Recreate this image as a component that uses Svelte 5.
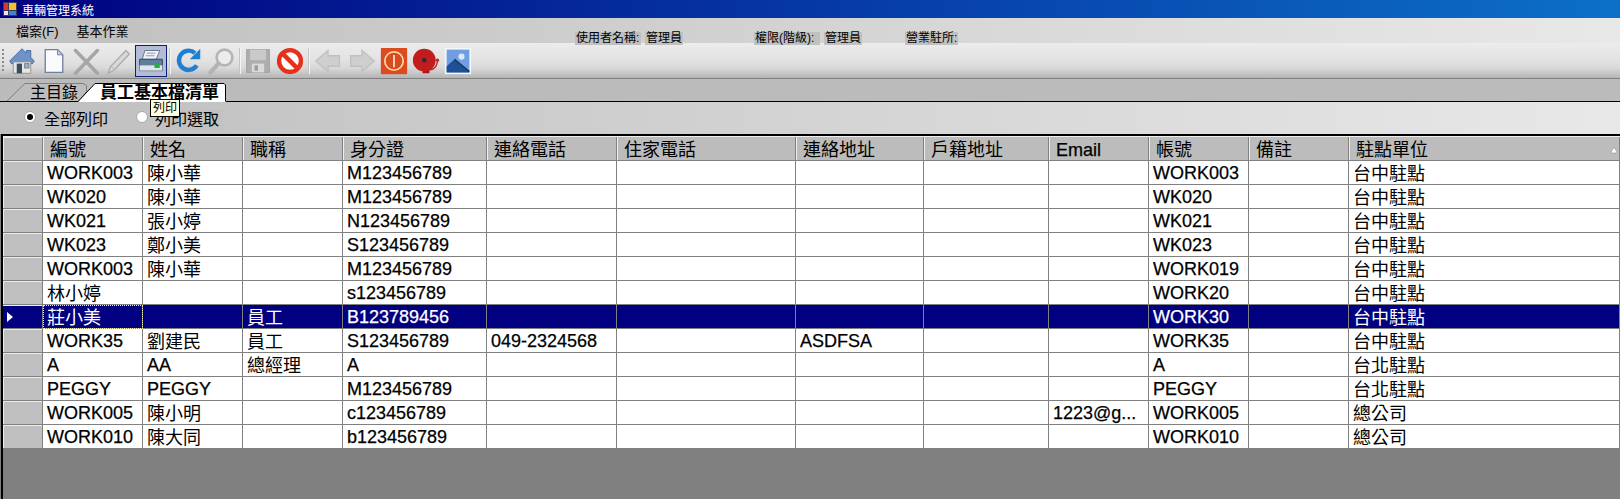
<script>
  const headers = ["編號", "姓名", "職稱", "身分證", "連絡電話", "住家電話", "連絡地址", "戶籍地址", "Email", "帳號", "備註", "駐點單位"];

  const rows = [
    ["WORK003", "陳小華", "", "M123456789", "", "", "", "", "", "WORK003", "", "台中駐點"],
    ["WK020", "陳小華", "", "M123456789", "", "", "", "", "", "WK020", "", "台中駐點"],
    ["WK021", "張小婷", "", "N123456789", "", "", "", "", "", "WK021", "", "台中駐點"],
    ["WK023", "鄭小美", "", "S123456789", "", "", "", "", "", "WK023", "", "台中駐點"],
    ["WORK003", "陳小華", "", "M123456789", "", "", "", "", "", "WORK019", "", "台中駐點"],
    ["林小婷", "", "", "s123456789", "", "", "", "", "", "WORK20", "", "台中駐點"],
    ["莊小美", "", "員工", "B123789456", "", "", "", "", "", "WORK30", "", "台中駐點"],
    ["WORK35", "劉建民", "員工", "S123456789", "049-2324568", "", "ASDFSA", "", "", "WORK35", "", "台中駐點"],
    ["A", "AA", "總經理", "A", "", "", "", "", "", "A", "", "台北駐點"],
    ["PEGGY", "PEGGY", "", "M123456789", "", "", "", "", "", "PEGGY", "", "台北駐點"],
    ["WORK005", "陳小明", "", "c123456789", "", "", "", "", "1223@g...", "WORK005", "", "總公司"],
    ["WORK010", "陳大同", "", "b123456789", "", "", "", "", "", "WORK010", "", "總公司"]
  ];

  const selectedRow = 6;
  const isCjk = (s) => /[^\x00-\x7f]/.test(s);
</script>

<div class="app">
  <div class="titlebar">
    <svg class="app-icon" viewBox="0 0 14 14" width="14" height="14">
      <rect width="14" height="14" fill="#3a3a5a" />
      <rect x="1" y="1" width="4" height="7" fill="#d83a2a" />
      <rect x="6" y="1" width="7" height="7" fill="#f0c030" />
      <rect x="1" y="9" width="4" height="4" fill="#e8e8e8" />
      <rect x="6" y="9" width="7" height="4" fill="#4080d8" />
    </svg>
    <span>車輛管理系統</span>
  </div>

  <div class="menubar">
    <span>檔案(F)</span>
    <span>基本作業</span>
    <div class="user-info">
      <div class="info"><span>使用者名稱:</span><span>管理員</span></div>
      <div class="info"><span>權限(階級):</span><span>管理員</span></div>
      <div class="info"><span>營業駐所:</span></div>
    </div>
  </div>

  <div class="toolbar">
    <div class="grip"></div>

    <button class="tool">
      <svg viewBox="0 0 32 32">
        <path d="M2 16 16 2l5 5V4h5v8l4 4-2 3H4z" fill="#6f93c8" stroke="#3f5f98" />
        <path d="M6 17h20v13H6z" fill="#e8e6e0" stroke="#8c8c8c" />
        <rect x="10" y="19" width="6" height="11" fill="#3a4a60" />
        <rect x="19" y="19" width="5" height="5" fill="#8fb0d8" stroke="#7a7a7a" />
      </svg>
    </button>
    <button class="tool">
      <svg viewBox="0 0 32 32">
        <path d="M6 3h14l6 6v20H6z" fill="#fbfbfd" stroke="#6f7f9f" stroke-width="1.5" />
        <path d="M20 3v6h6z" fill="#c4cede" stroke="#6f7f9f" />
      </svg>
    </button>
    <button class="tool">
      <svg viewBox="0 0 32 32">
        <path d="M4 4 29 30M29 4 4 30" stroke="#a6a6a6" stroke-width="4" stroke-linecap="round" />
      </svg>
    </button>
    <button class="tool">
      <svg viewBox="0 0 32 32">
        <path d="M5 30 7 23 25 4l4 4-17 18z" fill="#d8d8d8" stroke="#ababab" stroke-width="1.5" />
        <path d="M8 22l4 4" stroke="#ababab" />
      </svg>
    </button>
    <button class="tool active">
      <svg viewBox="0 0 32 32">
        <path d="M9 4h17l-4 10H6z" fill="#f2f4f6" stroke="#5c6c88" />
        <path d="M11 7h10M10 10h10" stroke="#7e8ca4" />
        <path d="M3 14h26v13H3z" fill="#5f7f9f" stroke="#2d4058" />
        <rect x="3" y="21" width="26" height="6" fill="#dfe5ea" />
        <rect x="20" y="19" width="6" height="5" fill="#22b03c" />
      </svg>
    </button>
    <div class="sep"></div>

    <button class="tool">
      <svg viewBox="0 0 32 32">
        <path d="M26 21a11 11 0 1 1-2-14" fill="none" stroke="#1f7fd0" stroke-width="5" />
        <path d="M30 2v12H18z" fill="#1f7fd0" />
      </svg>
    </button>
    <button class="tool m1">
      <svg viewBox="0 0 32 32">
        <circle cx="20" cy="12" r="9" fill="#ececec" stroke="#b4b4b4" stroke-width="3" />
        <path d="M13 19 4 29" stroke="#b4b4b4" stroke-width="5" stroke-linecap="round" />
      </svg>
    </button>
    <div class="sep"></div>

    <button class="tool">
      <svg viewBox="0 0 32 32">
        <path d="M3 3h26v26H3z" fill="#aeaeae" stroke="#9c9c9c" />
        <rect x="7" y="3" width="18" height="12" fill="#cacaca" />
        <rect x="9" y="19" width="14" height="10" fill="#dadada" />
        <rect x="12" y="21" width="4" height="6" fill="#9c9c9c" />
      </svg>
    </button>
    <button class="tool">
      <svg viewBox="0 0 32 32">
        <circle cx="16" cy="16" r="12.500" fill="#fff" stroke="#e5301c" stroke-width="5" />
        <path d="M7 7 25 25" stroke="#e5301c" stroke-width="5" />
      </svg>
    </button>
    <div class="sep wide"></div>

    <button class="tool">
      <svg viewBox="0 0 32 32">
        <path d="M2 16 16 4v6h13v12H16v6z" fill="#cfcfcf" stroke="#c0c0c0" stroke-width="1.5" />
      </svg>
    </button>
    <button class="tool m2">
      <svg viewBox="0 0 32 32">
        <path d="M30 16 16 4v6H3v12h13v6z" fill="#cfcfcf" stroke="#c0c0c0" stroke-width="1.5" />
      </svg>
    </button>
    <button class="tool">
      <svg viewBox="0 0 32 32">
        <rect x="1" y="1" width="30" height="30" rx="1" fill="#dc4a20" />
        <circle cx="16" cy="16" r="10.500" fill="none" stroke="#f6d8a8" stroke-width="2" />
        <path d="M16 9v14" stroke="#f6e4c4" stroke-width="2" />
      </svg>
    </button>
    <button class="tool">
      <svg viewBox="0 0 32 32">
        <path d="M12 26h8v4h-8z" fill="#b01818" />
        <path d="M20 26c5 0 8-3 9-9" fill="none" stroke="#c02020" stroke-width="1.5" />
        <circle cx="29" cy="15" r="2" fill="#d02020" />
        <circle cx="14" cy="15" r="13" fill="#c21c1c" />
        <circle cx="14" cy="15" r="2.500" fill="#203038" />
      </svg>
    </button>
    <button class="tool">
      <svg viewBox="0 0 32 32">
        <rect x="1" y="1" width="30" height="30" fill="#f4f6fa" />
        <rect x="3" y="3" width="26" height="26" fill="#6f9fe0" />
        <circle cx="20" cy="11" r="3.500" fill="#dce8f8" />
        <path d="M3 22 12 14 20 21 29 28v1H3z" fill="#1f4f98" />
        <path d="M12 14 29 28" stroke="#18304f" stroke-width="1.500" />
      </svg>
    </button>
  </div>

  <div class="tabstrip">
    <div class="tab">
      <svg viewBox="0 0 80 18" width="80" height="18">
        <path d="M0 18 18 .5h58l3.500 2v6L72 18" fill="#bdbdbd" stroke="#808080" />
      </svg>
      <span>主目錄</span>
    </div>
    <div class="tab current">
      <svg viewBox="0 0 148 19" width="148" height="19">
        <path d="M0 19 17 .5h129l1.500 1.500V19z" fill="#fff" />
        <path d="M0 18.500 17 .5h129l1.500 1.500V18" fill="none" stroke="#000" />
      </svg>
      <span>員工基本檔清單</span>
    </div>
  </div>

  <div class="options">
    <label class="radio">
      <span class="dot checked"></span>
      <span class="radio-text">全部列印</span>
    </label>
    <label class="radio">
      <span class="dot"></span>
      <span class="radio-text">列印選取</span>
    </label>
    <div class="tooltip">列印</div>
  </div>

  <div class="grid">
    <div class="row head">
      <div class="rowhead"></div>
      {#each headers as h}
        <div class="cell" class:cjk={isCjk(h)}>
          <span>{h}</span>
          {#if h === "駐點單位"}
            <svg class="sort" viewBox="0 0 8 8" width="8" height="8"><path d="M4 1 7.500 7H.5z" fill="#fff" stroke="#9a9a9a" stroke-width=".7" /></svg>
          {/if}
        </div>
      {/each}
    </div>
    {#each rows as row, i}
      <div class="row" class:selected={i === selectedRow}>
        <div class="rowhead">
          {#if i === selectedRow}
            <svg viewBox="0 0 6 10" width="6" height="10"><path d="M0 0 6 5 0 10z" fill="#fff" /></svg>
          {/if}
        </div>
        {#each row as value, c}
          <div class="cell" class:cjk={isCjk(value)} class:focus={i === selectedRow && c === 0}>{value}</div>
        {/each}
      </div>
    {/each}
  </div>
</div>

<style>
  :global(body) {
    margin: 0;
    background: #808080;
  }

  .app {
    display: flex;
    flex-direction: column;
    height: 499px;
    overflow: hidden;
    font-family: "Liberation Sans", "Noto Sans CJK TC", sans-serif;
    color: #000;
    position: relative;
  }

  .titlebar {
    height: 18px;
    display: flex;
    align-items: center;
    gap: 5px;
    padding-left: 3px;
    font-size: 12px;
    color: #fff;
    background: linear-gradient(90deg, #000080, #0c70c8);
  }

  .menubar {
    height: 25px;
    display: flex;
    align-items: center;
    gap: 18px;
    padding-left: 16px;
    font-size: 13px;
    background: linear-gradient(90deg, #bfbfbf, #e8e8e8);
  }

  .user-info {
    position: absolute;
    top: 32px;
    left: 575px;
    z-index: 2;
    display: grid;
    grid-template-columns: 179px 151px auto;
    font-size: 12px;
    line-height: 13px;
  }

  .info {
    display: flex;
    gap: 4px;
  }

  .info span {
    background: #c0c0c0;
    padding: 0 1px;
  }

  .info span:first-child:not(:only-child) {
    min-width: 66px;
    box-sizing: border-box;
  }

  .toolbar {
    height: 36px;
    display: flex;
    align-items: center;
    padding-left: 2px;
    box-sizing: border-box;
    border-bottom: 1px solid #808080;
    background: linear-gradient(180deg, #ececec 0, #e2e2e2 50%, #d8d8d8 72%, #b4b4b4 100%);
  }

  .grip {
    width: 2px;
    height: 24px;
    margin-right: 2px;
    background: repeating-linear-gradient(180deg, #8c8c8c 0 2px, transparent 2px 4px);
  }

  .tool {
    width: 32px;
    height: 32px;
    padding: 1px;
    border: 1px solid transparent;
    background: none;
    box-sizing: border-box;
    flex: none;
  }

  .tool svg {
    display: block;
    width: 100%;
    height: 100%;
  }

  .tool.active {
    margin-left: 1px;
    border-color: #0a1f78;
    background: #b4bbd4;
  }

  .m1 {
    margin-left: 1px;
  }

  .m2 {
    margin-left: 2px;
  }

  .sep {
    width: 2px;
    height: 26px;
    margin: 0 1px 0 2px;
    background: #f4f4f4;
    border-left: 1px solid #c4c4c4;
    box-sizing: border-box;
    flex: none;
  }

  .sep.wide {
    margin-right: 2px;
  }

  .tabstrip {
    height: 23px;
    box-sizing: border-box;
    padding: 0 0 0 7px;
    display: flex;
    align-items: flex-end;
    border-bottom: 1px solid #000;
    background: #bbb;
  }

  .tab {
    position: relative;
    width: 80px;
    height: 18px;
    font-size: 16px;
    line-height: 20px;
    flex: none;
  }

  .tab svg {
    position: absolute;
    left: 0;
    top: 0;
    display: block;
  }

  .tab span {
    position: relative;
    margin-left: 23px;
    white-space: nowrap;
  }

  .tab.current {
    width: 148px;
    height: 19px;
    margin: 0 0 -1px -9px;
    font-weight: 700;
    font-size: 17px;
  }

  .tab.current span {
    margin-left: 22px;
  }

  .options {
    height: 32px;
    display: flex;
    align-items: center;
    padding-left: 24px;
    font-size: 16px;
    position: relative;
    background: linear-gradient(90deg, #bfbfbf, #e8e8e8);
  }

  .radio {
    display: flex;
    align-items: center;
    gap: 8px;
    width: 112px;
    flex: none;
  }

  .radio + .radio {
    gap: 7px;
  }

  .dot {
    width: 12px;
    height: 12px;
    margin-top: -3px;
    box-sizing: border-box;
    border-radius: 50%;
    border: 1px solid #a8a8a8;
    background: #fff;
    position: relative;
    flex: none;
  }

  .dot.checked::after {
    content: "";
    position: absolute;
    inset: 2px;
    border-radius: 50%;
    background: #000;
  }

  .radio-text {
    padding: 0 4px 0 0;
    background: #c2c2c2;
    line-height: 20px;
    margin-top: 3px;
    white-space: nowrap;
  }

  .tooltip {
    position: absolute;
    left: 150px;
    top: -3px;
    width: 30px;
    height: 18px;
    box-sizing: border-box;
    border: 1px solid #000;
    background: #ffffe1;
    font-size: 12px;
    line-height: 16px;
    text-align: center;
  }

  .grid {
    flex: 1;
    margin-left: 1px;
    border-left: 2px solid #000;
    border-top: 2px solid #000;
    background: #808080;
    font-size: 18px;
    -webkit-text-stroke: 0.25px currentColor;
    overflow: hidden;
  }

  .row {
    display: grid;
    grid-template-columns: 40px 100px 100px 100px 144px 130px 179px 128px 125px 100px 100px 100px 1fr;
    height: 24px;
    background: #fff;
  }

  .rowhead,
  .cell {
    box-sizing: border-box;
    border-right: 1px solid #808080;
    border-bottom: 1px solid #808080;
  }

  .rowhead {
    background: #c0c0c0;
    box-shadow: inset 1px 1px #ececec;
    display: flex;
    align-items: center;
    padding-left: 4px;
  }

  .cell {
    padding: 0 0 0 4px;
    line-height: 24px;
    white-space: nowrap;
    overflow: hidden;
  }

  .cjk {
    -webkit-text-stroke: 0;
    line-height: 27px;
  }

  .row.head {
    height: 25px;
    background: #bcbcbc;
    border-top: 1px solid #efefef;
    box-sizing: border-box;
  }

  .head .rowhead {
    background: #bcbcbc;
  }

  .head .cell {
    display: flex;
    align-items: center;
    justify-content: space-between;
    padding: 2px 1px 0 7px;
    box-shadow: inset 1px 0 #efefef;
    line-height: 22px;
  }

  .sort {
    flex: none;
  }

  .selected {
    background: #000080;
    color: #fff;
  }

  .selected .rowhead {
    background: #000080;
    box-shadow: inset 0 1px #efefef;
  }

  .focus {
    outline: 1px dotted #f4f0b0;
    outline-offset: -1px;
  }
</style>
